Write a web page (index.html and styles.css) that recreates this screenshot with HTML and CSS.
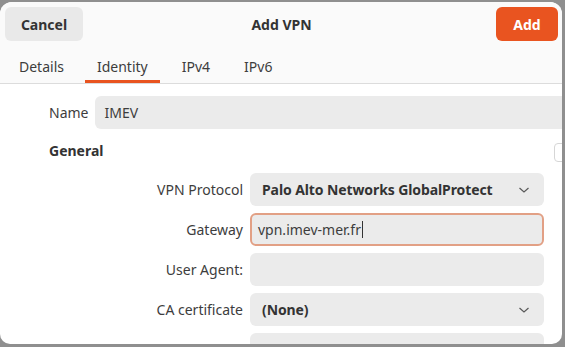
FILE: index.html
```html
<!DOCTYPE html>
<html>
<head>
<meta charset="utf-8">
<link rel="stylesheet" href="styles.css">
</head>
<body>
<div class="window">
  <div class="header">
    <div class="topbar">
      <button class="btn btn-cancel">Cancel</button>
      <div class="title">Add VPN</div>
      <button class="btn btn-add">Add</button>
    </div>
    <div class="tabs">
      <div class="tab">Details</div>
      <div class="tab active">Identity</div>
      <div class="tab">IPv4</div>
      <div class="tab">IPv6</div>
    </div>
  </div>
  <div class="content">
    <div class="name-row">
      <span class="label">Name</span>
      <div class="field">IMEV</div>
    </div>
    <div class="section-row">
      <span class="section">General</span>
      <span class="check"></span>
    </div>
    <div class="form">
      <span class="label">VPN Protocol</span>
      <div class="field combo"><span class="bold">Palo Alto Networks GlobalProtect</span>
        <svg class="chev" width="12" height="8" viewBox="0 0 12 8"><path d="M1.5 2 L6 6 L10.5 2" fill="none" stroke="#5a5a5a" stroke-width="1.2"/></svg>
      </div>
      <span class="label">Gateway</span>
      <div class="field focused">vpn.imev-mer.fr<span class="caret"></span></div>
      <span class="label">User Agent:</span>
      <div class="field"></div>
      <span class="label">CA certificate</span>
      <div class="field combo"><span class="bold">(None)</span>
        <svg class="chev" width="12" height="8" viewBox="0 0 12 8"><path d="M1.5 2 L6 6 L10.5 2" fill="none" stroke="#5a5a5a" stroke-width="1.2"/></svg>
      </div>
      <span class="label"></span>
      <div class="field"></div>
    </div>
  </div>
</div>
</body>
</html>
```

FILE: styles.css
```css
html, body {
  margin: 0;
  padding: 0;
}
body {
  background: #8f8f8f;
  width: 565px;
  height: 347px;
  overflow: hidden;
  font-family: "Noto Sans", "DejaVu Sans", sans-serif;
  font-size: 14px;
  color: #3d3d3d;
}
.window {
  margin: 2px 3px 0 0;
  height: 342px;
  background: #ffffff;
  border-radius: 12px 12px 10px 10px;
  overflow: hidden;
}
.header {
  background: #fafafa;
  height: 81px;
  border-bottom: 1px solid #dcdcdc;
  display: flex;
  flex-direction: column;
}
.topbar {
  display: grid;
  grid-template-columns: 1fr auto 1fr;
  align-items: center;
  padding: 5px 4px 0 5px;
  height: 34px;
}
.btn {
  border: none;
  height: 34px;
  border-radius: 6px;
  font-family: inherit;
  font-size: 14px;
  font-weight: bold;
  padding: 0;
}
.btn-cancel {
  width: 78px;
  background: #e9e9e9;
  color: #333;
  justify-self: start;
}
.btn-add {
  width: 62px;
  background: #e95420;
  color: #fff;
  justify-self: end;
}
.title {
  font-weight: bold;
  color: #333;
}
.tabs {
  display: flex;
  gap: 10px;
  padding-left: 7px;
  margin-top: 9px;
  height: 33px;
}
.tab {
  padding: 0 12px;
  display: flex;
  align-items: center;
  color: #3d3d3d;
  border-bottom: 3px solid transparent;
  box-sizing: border-box;
  height: 33px;
  padding-top: 3px;
}
.tab:first-child {
  margin-right: -1px;
}
.tab.active {
  border-bottom-color: #e95420;
}
.content {
  padding: 12px 0 0 49px;
}
.name-row {
  display: flex;
  align-items: center;
  gap: 7px;
}
.field {
  height: 33px;
  background: #ebebeb;
  border-radius: 6px;
  box-sizing: border-box;
  display: flex;
  align-items: center;
  padding: 0 9px;
  color: #3d3d3d;
}
.name-row .field {
  flex: 1;
  border-radius: 6px 0 0 6px;
}
.section-row {
  display: flex;
  align-items: center;
  justify-content: space-between;
  height: 20px;
  margin-top: 11px;
}
.section {
  font-weight: bold;
  color: #333;
}
.check {
  width: 18px;
  height: 17px;
  border: 1px solid #d6d6d6;
  border-radius: 4px;
  margin-right: -12px;
  margin-top: 5px;
}
.form {
  display: grid;
  grid-template-columns: 194px 294px;
  column-gap: 7px;
  row-gap: 7px;
  margin-top: 13px;
}
.form .label {
  text-align: right;
  align-self: center;
}
.combo {
  justify-content: space-between;
  padding: 0 14px 0 12px;
}
.bold {
  font-weight: bold;
  color: #333;
  letter-spacing: -0.1px;
}
.focused {
  border: 2px solid #e2a085;
  padding-left: 6px;
}
.caret {
  display: inline-block;
  width: 1px;
  height: 17px;
  background: #333;
  margin-left: 1px;
}
```
